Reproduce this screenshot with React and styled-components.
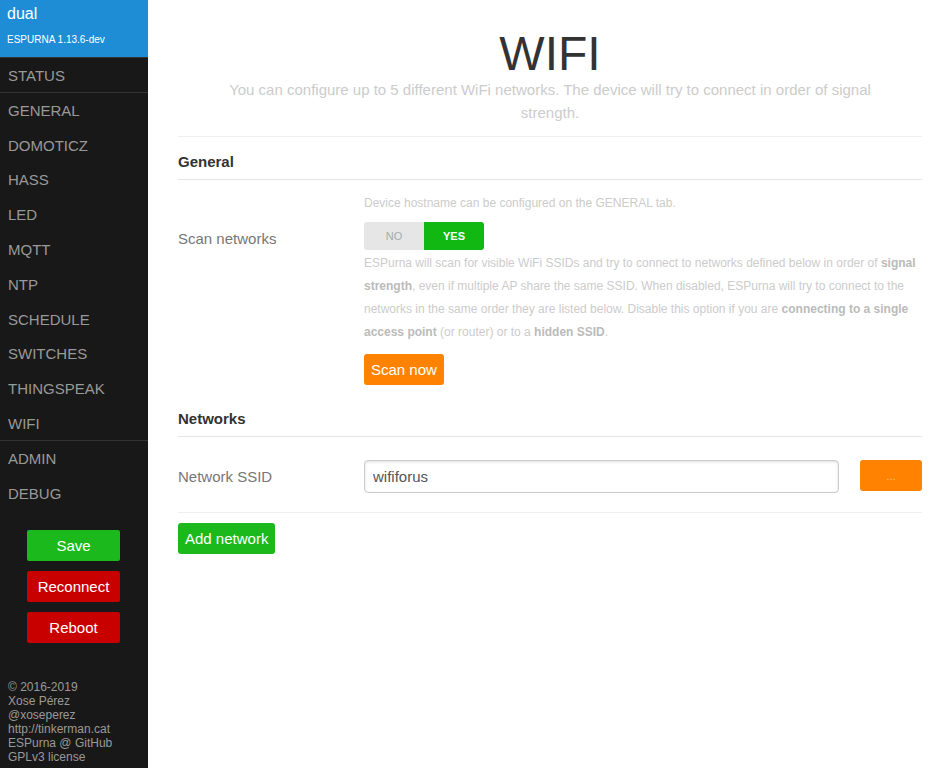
import styled, { createGlobalStyle } from "styled-components";

const GlobalStyle = createGlobalStyle`
    html, body {
        margin: 0;
        padding: 0;
        background: #fff;
        font-family: "Liberation Sans", Arial, sans-serif;
    }
`;

const menuItems = [
    { name: "STATUS", divider: true },
    { name: "GENERAL" },
    { name: "DOMOTICZ" },
    { name: "HASS" },
    { name: "LED" },
    { name: "MQTT" },
    { name: "NTP" },
    { name: "SCHEDULE" },
    { name: "SWITCHES" },
    { name: "THINGSPEAK" },
    { name: "WIFI", divider: true },
    { name: "ADMIN" },
    { name: "DEBUG" },
];

const footerLines = [
    "© 2016-2019",
    "Xose Pérez",
    "@xoseperez",
    "http://tinkerman.cat",
    "ESPurna @ GitHub",
    "GPLv3 license",
];

const App = () => {
    return (
        <Layout>
            <GlobalStyle />
            <Sidebar>
                <Brand>
                    <BrandName>dual</BrandName>
                    <BrandVersion>ESPURNA 1.13.6-dev</BrandVersion>
                </Brand>
                <Menu>
                    {menuItems.map((item) => (
                        <MenuItem key={item.name} $divider={item.divider}>
                            {item.name}
                        </MenuItem>
                    ))}
                </Menu>
                <ActionList>
                    <SideButton $color="#1cb91c">Save</SideButton>
                    <SideButton $color="#c90000">Reconnect</SideButton>
                    <SideButton $color="#c90000">Reboot</SideButton>
                </ActionList>
                <Footer>
                    {footerLines.map((line) => (
                        <div key={line}>{line}</div>
                    ))}
                </Footer>
            </Sidebar>

            <Main>
                <Header>
                    <Title>WIFI</Title>
                    <Subtitle>
                        You can configure up to 5 different WiFi networks. The device will try to connect in order of signal strength.
                    </Subtitle>
                </Header>

                <Legend>General</Legend>

                <FormRow>
                    <Label />
                    <Field>
                        <SmallHint>Device hostname can be configured on the GENERAL tab.</SmallHint>
                    </Field>
                </FormRow>

                <FormRow $center>
                    <Label $nudge>Scan networks</Label>
                    <Field>
                        <Toggle>
                            <ToggleSide>NO</ToggleSide>
                            <ToggleSide $on>YES</ToggleSide>
                        </Toggle>
                    </Field>
                </FormRow>

                <FormRow>
                    <Label />
                    <Field>
                        <Hint>
                            ESPurna will scan for visible WiFi SSIDs and try to connect to networks defined below in order of <b>signal strength</b>, even if multiple AP share the same SSID. When disabled, ESPurna will try to connect to the networks in the same order they are listed below. Disable this option if you are <b>connecting to a single access point</b> (or router) or to a <b>hidden SSID</b>.
                        </Hint>
                        <ActionButton $color="#ff8300">Scan now</ActionButton>
                    </Field>
                </FormRow>

                <Legend $top="24px">Networks</Legend>

                <NetworkRow>
                    <Label>Network SSID</Label>
                    <SsidField>
                        <TextInput defaultValue="wififorus" />
                    </SsidField>
                    <MoreButton>...</MoreButton>
                </NetworkRow>

                <ActionButton $color="#1cb91c">Add network</ActionButton>
            </Main>
        </Layout>
    );
};

const Layout = styled.div`
    display: flex;
    min-height: 768px;
`

const Sidebar = styled.nav`
    width: 148px;
    flex-shrink: 0;
    background-color: #191818;
    display: flex;
    flex-direction: column;
`

const Brand = styled.div`
    background-color: #1f8dd6;
    height: 57px;
    padding: 4px 7px 0;
    box-sizing: border-box;
    color: white;
`

const BrandName = styled.div`
    font-size: 16px;
    line-height: 20px;
`

const BrandVersion = styled.div`
    font-size: 10px;
    margin-top: 10px;
`

const Menu = styled.ul`
    list-style: none;
    margin: 0;
    padding: 0;
    border-top: 1px solid #333;
`

const MenuItem = styled.li`
    color: #999;
    font-size: 15px;
    height: 34.8px;
    line-height: 36px;
    padding-left: 8px;
    box-sizing: border-box;
    border-bottom: ${(p) => (p.$divider ? "1px solid #333" : "none")};
`

const ActionList = styled.div`
    display: flex;
    flex-direction: column;
    align-items: center;
    gap: 10px;
    margin-top: 20px;
`

const SideButton = styled.button`
    width: 93px;
    height: 31px;
    border: none;
    border-radius: 2px;
    background-color: ${(p) => p.$color};
    color: white;
    font-family: inherit;
    font-size: 15px;
    padding: 0;
    margin-left: -1px;
`

const Footer = styled.div`
    margin-top: auto;
    padding: 0 8px 4px;
    color: #999;
    font-size: 12px;
    line-height: 14px;
`

const Main = styled.main`
    flex: 1;
    padding: 0 16px 0 30px;
`

const Header = styled.div`
    text-align: center;
    padding: 30px 30px 12px;
    border-bottom: 1px solid #eee;
`

const Title = styled.h1`
    margin: 0;
    font-size: 48px;
    font-weight: 300;
    line-height: 48px;
    color: #333;
`

const Subtitle = styled.h2`
    margin: 0;
    font-size: 15px;
    font-weight: 300;
    line-height: 23px;
    color: #ccc;
`

const Legend = styled.div`
    margin-top: ${(p) => p.$top || "15px"};
    padding-bottom: 7px;
    border-bottom: 1px solid #e5e5e5;
    font-size: 15px;
    font-weight: bold;
    color: #333;
    line-height: 20px;
`

const FormRow = styled.div`
    display: grid;
    grid-template-columns: 186px 1fr;
    align-items: ${(p) => (p.$center ? "center" : "start")};
`

const Label = styled.div`
    font-size: 15px;
    color: #777;
    padding-top: ${(p) => (p.$nudge ? "4px" : "0")};
`

const Field = styled.div`
    display: flex;
    flex-direction: column;
    align-items: flex-start;
`

const SmallHint = styled.div`
    font-size: 12px;
    color: #ccc;
    margin: 16px 0 12px;
`

const Toggle = styled.div`
    display: flex;
    width: 120px;
    height: 28px;
    border-radius: 3px;
    overflow: hidden;
`

const ToggleSide = styled.div`
    flex: 1;
    display: flex;
    align-items: center;
    justify-content: center;
    font-size: 11px;
    font-weight: ${(p) => (p.$on ? "bold" : "normal")};
    background-color: ${(p) => (p.$on ? "#12b812" : "#e6e6e6")};
    color: ${(p) => (p.$on ? "white" : "#aaa")};
`

const Hint = styled.div`
    font-size: 12px;
    line-height: 23px;
    color: #ccc;
    margin-top: 2px;
    margin-right: 6px;

    b {
        color: #bbb;
    }
`

const ActionButton = styled.button`
    margin-top: 10px;
    height: 31px;
    padding: 0 7px;
    border: none;
    border-radius: 3px;
    background-color: ${(p) => p.$color};
    color: white;
    font-family: inherit;
    font-size: 15px;
`

const NetworkRow = styled.div`
    display: grid;
    grid-template-columns: 186px 496px 1fr;
    align-items: center;
    padding: 23px 0 19px;
    border-bottom: 1px solid #eee;
`

const SsidField = styled.div`
    display: flex;
`

const TextInput = styled.input`
    width: 475px;
    height: 33px;
    box-sizing: border-box;
    border: 1px solid #ccc;
    border-radius: 4px;
    box-shadow: inset 0 1px 3px #ddd;
    padding: 0 8px;
    font-family: inherit;
    font-size: 15px;
    color: #555;
`

const MoreButton = styled.button`
    height: 31px;
    border: none;
    border-radius: 3px;
    background-color: #ff8300;
    color: #ffc27f;
    font-size: 11px;
    margin-top: -2px;
`

export default App;
